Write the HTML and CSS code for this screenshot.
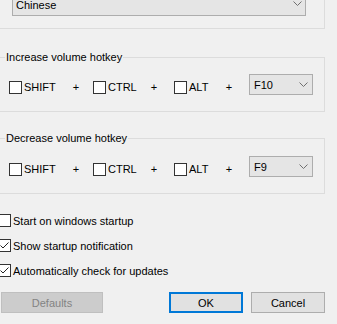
FILE: index.html
```html
<!DOCTYPE html>
<html>
<head>
<meta charset="utf-8">
<link rel="stylesheet" href="styles.css">
</head>
<body>
<div class="page">
  <div class="group g1">
    <div class="select wide"><span>Chinese</span><svg class="chev" width="9" height="5" viewBox="0 0 9 5"><polyline points="0.5,0.5 4.5,4.5 8.5,0.5" fill="none" stroke="#707070" stroke-width="1"/></svg></div>
  </div>

  <fieldset class="group g2">
    <legend>Increase volume hotkey</legend>
    <div class="row">
      <label class="chk c1"><span class="box"></span>SHIFT</label>
      <span class="plus">+</span>
      <label class="chk c2"><span class="box"></span>CTRL</label>
      <span class="plus">+</span>
      <label class="chk c3"><span class="box"></span>ALT</label>
      <span class="plus p3">+</span>
      <div class="select key"><span>F10</span><svg class="chev" width="9" height="5" viewBox="0 0 9 5"><polyline points="0.5,0.5 4.5,4.5 8.5,0.5" fill="none" stroke="#707070" stroke-width="1"/></svg></div>
    </div>
  </fieldset>

  <fieldset class="group g3">
    <legend>Decrease volume hotkey</legend>
    <div class="row">
      <label class="chk c1"><span class="box"></span>SHIFT</label>
      <span class="plus">+</span>
      <label class="chk c2"><span class="box"></span>CTRL</label>
      <span class="plus">+</span>
      <label class="chk c3"><span class="box"></span>ALT</label>
      <span class="plus p3">+</span>
      <div class="select key"><span>F9</span><svg class="chev" width="9" height="5" viewBox="0 0 9 5"><polyline points="0.5,0.5 4.5,4.5 8.5,0.5" fill="none" stroke="#707070" stroke-width="1"/></svg></div>
    </div>
  </fieldset>

  <div class="options">
    <label class="chk opt"><span class="box"></span>Start on windows startup</label>
    <label class="chk opt"><span class="box checked"><svg width="11" height="11" viewBox="0 0 11 11"><polyline points="1.5,5.5 4,8 9.5,2.5" fill="none" stroke="#222" stroke-width="1"/></svg></span>Show startup notification</label>
    <label class="chk opt"><span class="box checked"><svg width="11" height="11" viewBox="0 0 11 11"><polyline points="1.5,5.5 4,8 9.5,2.5" fill="none" stroke="#222" stroke-width="1"/></svg></span>Automatically check for updates</label>
  </div>

  <div class="buttons">
    <div class="btn disabled">Defaults</div>
    <div class="spacer"></div>
    <div class="btn default">OK</div>
    <div class="btn">Cancel</div>
  </div>
</div>
</body>
</html>
```
FILE: styles.css
```css
html, body {
  margin: 0;
  padding: 0;
  background: #f0f0f0;
  overflow: hidden;
}
body {
  font-family: "Liberation Sans", Arial, sans-serif;
  font-size: 11px;
  color: #000;
}
.page {
  width: 328px;
  margin: -8px 0 0 -3px;
}
.group {
  border: 1px solid #dcdcdc;
  margin: 0;
  box-sizing: border-box;
  width: 328px;
}
.g1 {
  padding: 0 0 12px 14px;
  height: 37px;
}
fieldset.group {
  padding: 0;
  min-inline-size: 0;
}
legend {
  padding: 0 1px;
  margin-left: 7px;
  line-height: 14px;
}
.g2 {
  margin-top: 21px;
  height: 62px;
}
.g3 {
  margin-top: 19px;
  height: 63px;
}
.select {
  box-sizing: border-box;
  border: 1px solid #adadad;
  background: #e5e5e5;
  display: flex;
  align-items: center;
  justify-content: space-between;
}
.select.wide {
  height: 23px;
  width: 294px;
  padding: 0 3px;
}
.select.wide .chev {
  margin-top: -3px;
}
.select.key {
  width: 64px;
  height: 21px;
  padding: 0 4px;
}
.row {
  display: flex;
  align-items: center;
  padding-left: 11px;
}
.g2 .row { margin-top: 10px; }
.g3 .row { margin-top: 11px; }
.row .chk, .row .plus {
  margin-top: 5px;
}
.chk {
  display: flex;
  align-items: center;
}
.box {
  box-sizing: border-box;
  width: 13px;
  height: 13px;
  border: 1px solid #333;
  background: #fff;
  margin-right: 2px;
  display: flex;
  align-items: center;
  justify-content: center;
}
.c1 { width: 58px; }
.c2 { width: 52px; margin-left: 8px; }
.c3 { width: 46px; margin-left: 11px; }
.plus {
  width: 18px;
  text-align: center;
}
.p3 { margin-right: 11px; }
.options {
  margin-top: 20px;
  display: flex;
  flex-direction: column;
  gap: 12px;
  padding-left: 1px;
}
.buttons {
  display: flex;
  margin-top: 15px;
  padding-left: 4px;
  gap: 8px;
}
.btn {
  box-sizing: border-box;
  width: 74px;
  height: 21px;
  border: 1px solid #adadad;
  background: #e1e1e1;
  display: flex;
  align-items: center;
  justify-content: center;
}
.btn.disabled {
  width: 102px;
  background: #cccccc;
  border-color: #bfbfbf;
  color: #838383;
}
.btn.default {
  border: 2px solid #0078d7;
}
.spacer {
  width: 50px;
}
```
